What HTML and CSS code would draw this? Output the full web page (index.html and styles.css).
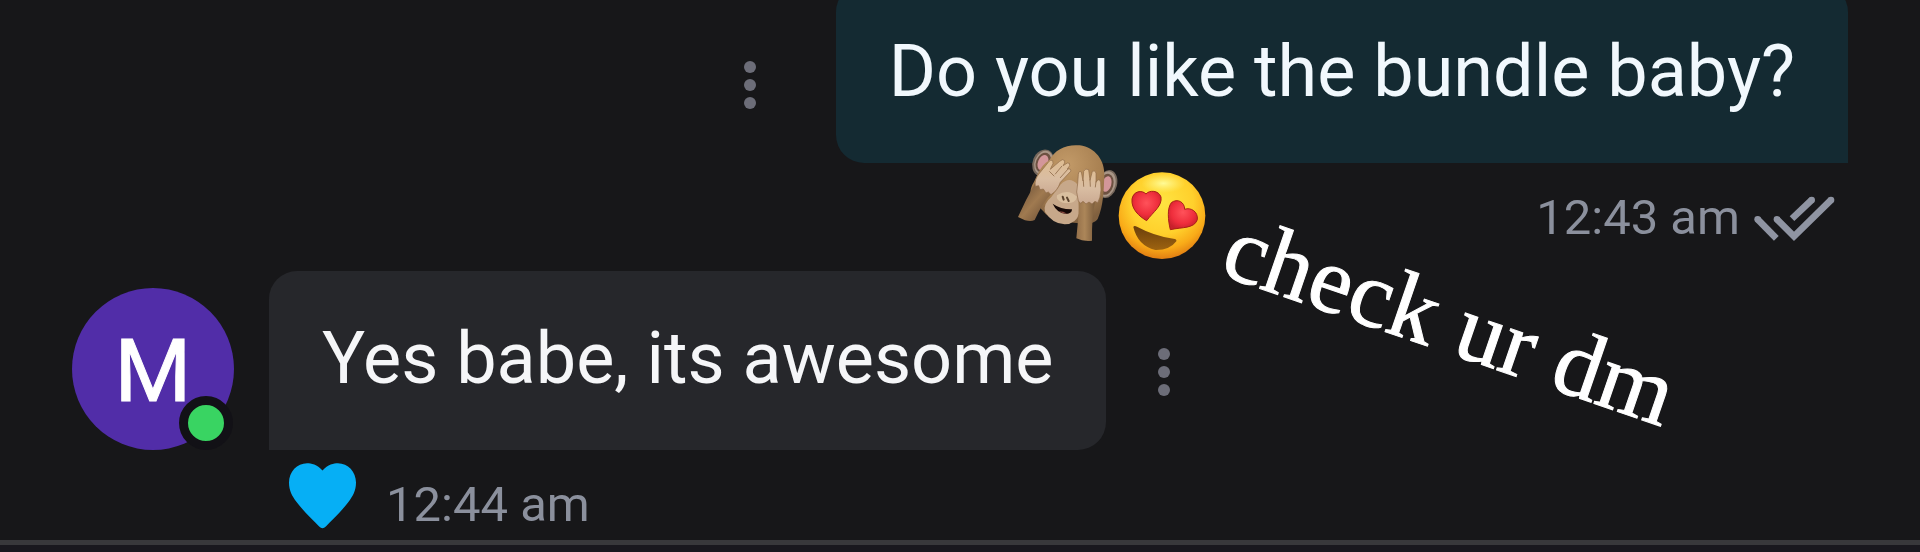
FILE: index.html
```html
<!DOCTYPE html>
<html lang="en">
<head>
<meta charset="utf-8">
<meta name="viewport" content="width=device-width, initial-scale=1">
<title>Chat</title>
<link rel="stylesheet" href="styles.css">
</head>
<body>
<main class="thread">
  <article class="message message-sent">
    <button class="more" type="button" aria-label="Message options"><i class="more-dot"></i><i class="more-dot"></i><i class="more-dot"></i></button>
    <p class="bubble bubble-sent">Do you like the bundle baby?</p>
    <div class="meta meta-sent">
      <time>12:43 am</time>
      <svg class="checks" viewBox="756 130 252 144" role="img" aria-label="Read">
        <g fill="none" stroke="#8f94a2" stroke-width="20">
          <path d="M773 206L829 263"/>
          <path d="M831 206L882 257L993 148"/>
          <path d="M876 204L935 148"/>
        </g>
        <g fill="#8f94a2"><circle cx="773" cy="206" r="10"/><circle cx="831" cy="206" r="10"/><circle cx="993" cy="148" r="10"/><circle cx="935" cy="148" r="10"/></g>
      </svg>
    </div>
  </article>

  <article class="message message-received">
    <div class="avatar">M<span class="status"></span></div>
    <p class="bubble bubble-received">Yes babe, its awesome</p>
    <button class="more" type="button" aria-label="Message options"><i class="more-dot"></i><i class="more-dot"></i><i class="more-dot"></i></button>
    <div class="meta meta-received">
      <svg class="heart" viewBox="0 0 200 196" role="img" aria-label="Blue heart">
        <path fill="#06aff5" d="M100 22C84 3 66 0 54 0C24 0 0 25 0 58C0 82 10 100 22 115C40 140 70 168 90 189Q100 199 110 189C130 168 160 140 178 115C190 100 200 82 200 58C200 25 176 0 146 0C134 0 116 3 100 22Z"/>
      </svg>
      <time>12:44 am</time>
    </div>
  </article>

  <svg class="sticker sticker-monkey" viewBox="48 39 306 300" role="img" aria-label="See no evil monkey">
    <defs>
      <radialGradient id="fur" cx="50%" cy="25%" r="75%"><stop offset="0" stop-color="#c29a68"/><stop offset=".6" stop-color="#a98152"/><stop offset="1" stop-color="#80603f"/></radialGradient>
      <linearGradient id="arm-left" x1="0" y1="0" x2="1" y2="1"><stop offset=".2" stop-color="#7b5c3e"/><stop offset=".5" stop-color="#a07a50"/><stop offset=".85" stop-color="#75563a"/></linearGradient>
      <linearGradient id="arm-right" x1="0" y1="0" x2="1" y2="0"><stop offset="0" stop-color="#94704a"/><stop offset=".45" stop-color="#ac8659"/><stop offset="1" stop-color="#7c5d3d"/></linearGradient>
      <linearGradient id="hand" x1="0" y1="0" x2="0" y2="1"><stop offset="0" stop-color="#dfbd92"/><stop offset=".55" stop-color="#d9bda2"/><stop offset="1" stop-color="#cbaa92"/></linearGradient>
    </defs>
    <ellipse cx="129" cy="98" rx="31" ry="41" fill="#77685c" transform="rotate(22 129 98)"/>
    <ellipse cx="131" cy="98" rx="27" ry="37" fill="#a99687" transform="rotate(22 131 98)"/>
    <ellipse cx="130" cy="98" rx="22" ry="31" fill="#6d5141" transform="rotate(22 130 98)"/>
    <ellipse cx="129" cy="98" rx="15" ry="24" fill="#d3969a" transform="rotate(22 129 98)"/>
    <ellipse cx="322" cy="162" rx="29" ry="43" fill="#77685c" transform="rotate(15 322 162)"/>
    <ellipse cx="320" cy="162" rx="26" ry="39" fill="#a99687" transform="rotate(15 320 162)"/>
    <ellipse cx="319" cy="163" rx="21" ry="32" fill="#6d5141" transform="rotate(15 319 163)"/>
    <ellipse cx="320" cy="162" rx="14" ry="24" fill="#d3969a" transform="rotate(15 320 162)"/>
    <path fill="url(#fur)" d="M148 91C164 58 199 42 239 46C286 53 315 91 313 138C311 180 311 226 293 267C281 284 255 282 229 279C186 277 145 268 130 244C107 215 80 200 97 164C111 146 116 109 148 91Z"/>
    <path fill="#c7a88a" d="M181 164Q209 136 233 164L237 251Q229 281 194 283Q158 282 135 246Q129 221 154 201Z"/>
    <path fill="#d9bf9f" d="M171 196Q204 174 231 200Q226 224 188 218Q167 211 171 196Z"/>
    <path d="M188 200L191 209M201 203L206 213" stroke="#5c442e" stroke-width="6" stroke-linecap="round"/>
    <path fill="#160907" d="M158 221Q184 239 216 238Q216 251 199 252Q171 250 158 221Z"/>
    <path fill="#8f4a40" d="M176 244Q190 244 202 251Q188 252 176 244Z"/>
    <path fill="url(#arm-left)" d="M106 158Q124 172 153 193Q128 218 104 270Q94 276 75 271L54 261Q76 211 106 158Z"/>
    <path fill="url(#arm-right)" d="M238 213Q263 224 285 216Q275 259 276 332Q250 335 229 325Q235 270 238 213Z"/>
    <path fill="url(#hand)" stroke="#8e6948" stroke-width="2" d="M106 169Q102 148 119 129L145 97Q151 87 158 92Q162 100 154 111L151 118L179 94Q188 85 194 92Q196 99 189 107L202 99Q211 97 209 107L202 117Q215 115 212 124L181 157Q172 183 153 194L145 186L138 189L130 177L120 179L116 167Z"/>
    <path fill="url(#hand)" stroke="#8e6948" stroke-width="2" d="M235 213Q226 185 233 161L235 133Q236 121 244 126L249 153L251 124Q256 113 266 119L270 151L277 124Q285 119 288 129L288 157L294 149Q302 148 302 158L303 180Q301 206 293 218L285 214L276 222L267 216L258 222L249 214L242 220Z"/>
    <path d="M149 125L162 138M185 109L166 132M205 116L181 143M250 151L251 169M270 149L271 169M288 155L286 171" fill="none" stroke="#9d7a59" stroke-width="3" stroke-linecap="round"/>
  </svg>

  <svg class="sticker sticker-smile" viewBox="354 123 264 267" role="img" aria-label="Heart eyes">
    <defs>
      <radialGradient id="face" cx="50%" cy="35%" r="66%"><stop offset="0" stop-color="#ffe441"/><stop offset=".55" stop-color="#ffd02c"/><stop offset=".8" stop-color="#f9ab18"/><stop offset="1" stop-color="#df7a12"/></radialGradient>
      <radialGradient id="shine" cx="50%" cy="50%" r="50%"><stop offset="0" stop-color="#fffb96"/><stop offset="1" stop-color="#fff37c" stop-opacity="0"/></radialGradient>
      <radialGradient id="love" cx="50%" cy="40%" r="60%"><stop offset="0" stop-color="#ff525a"/><stop offset=".65" stop-color="#ef2e3c"/><stop offset="1" stop-color="#c9212c"/></radialGradient>
      <linearGradient id="mouth" x1="0" y1="0" x2="0" y2="1"><stop offset="0" stop-color="#6b3f0b"/><stop offset="1" stop-color="#9d6310"/></linearGradient>
    </defs>
    <circle cx="486" cy="257" r="130" fill="url(#face)"/>
    <ellipse cx="490" cy="160" rx="66" ry="29" fill="url(#shine)"/>
    <path fill="url(#love)" stroke="#a91f17" stroke-width="3" d="M438 192C447 180 476 180 483 201C487 228 461 244 440 272C417 259 393 237 396 207C400 183 426 179 438 192Z"/>
    <path fill="url(#love)" stroke="#a91f17" stroke-width="3" d="M554 238C572 231 595 245 592 269C583 296 547 291 511 299C504 270 501 235 514 218C532 204 554 216 554 238Z"/>
    <path fill="url(#mouth)" d="M400 291Q402 286 411 290Q463 318 520 326Q531 326 529 334Q509 361 466 360Q413 347 400 291Z"/>
  </svg>

  <p class="sticker sticker-text">check ur dm</p>
</main>
<footer class="composer-edge"></footer>
</body>
</html>
```
FILE: styles.css
```css
* {
  box-sizing: border-box;
}

body {
  display: flex;
  flex-direction: column;
  min-height: 100vh;
  margin: 0;
  background: #171719;
  color: #f5f6f8;
  font-family: Roboto, "Liberation Sans", sans-serif;
  overflow: hidden;
}

p {
  margin: 0;
}

.thread {
  position: relative;
  display: flex;
  flex-direction: column;
  gap: 23px;
  padding: 0 72px 5px;
}

.message {
  display: grid;
}

.message-sent {
  grid-template-columns: auto auto;
  justify-content: end;
  column-gap: 56px;
  margin-top: -16px;
}

.message-received {
  grid-template-columns: auto auto auto;
  justify-content: start;
  column-gap: 28px;
}

.bubble {
  padding: 46px 53px 49px;
  font-size: 72px;
  line-height: 84px;
  white-space: nowrap;
}

.bubble-sent {
  border-radius: 28px 28px 0 28px;
  background: #142a32;
  color: #f1f8fd;
}

.bubble-received {
  border-radius: 28px 28px 28px 0;
  background: #26272b;
}

.more {
  display: flex;
  flex-direction: column;
  align-items: center;
  justify-content: center;
  gap: 6px;
  width: 60px;
  padding: 22px 0 0;
  border: 0;
  background: none;
}

.more-dot {
  width: 12px;
  height: 12px;
  border-radius: 50%;
  background: #6c6d78;
}

.avatar {
  position: relative;
  align-self: end;
  display: grid;
  place-items: center;
  width: 162px;
  height: 162px;
  margin-right: 7px;
  padding-top: 4px;
  border-radius: 50%;
  background: #512da8;
  color: #ffffff;
  font-size: 88px;
  line-height: 88px;
  -webkit-text-stroke: 1px #ffffff;
}

.status {
  position: absolute;
  right: 1px;
  bottom: 0;
  width: 54px;
  height: 54px;
  border: 9px solid #121116;
  border-radius: 50%;
  background: #39d462;
}

.meta {
  grid-column: 2;
  display: flex;
  color: #8b909d;
  font-size: 49px;
  line-height: 60px;
  white-space: nowrap;
}

.meta-sent {
  align-items: center;
  justify-content: flex-end;
  gap: 12px;
  padding: 25px 12px 0 0;
}

.meta-received {
  align-items: flex-end;
  gap: 30px;
  padding: 13px 0 0 20px;
}

.checks {
  width: 84px;
  height: 48px;
}

.heart {
  width: 67px;
  height: 66px;
  margin-bottom: 6px;
}

.sticker {
  position: absolute;
}

.sticker-monkey {
  top: 143px;
  right: 802px;
  width: 102px;
  height: 100px;
}

.sticker-smile {
  top: 171px;
  right: 714px;
  width: 88px;
  height: 89px;
}

.sticker-text {
  top: 194px;
  right: 228px;
  width: 474px;
  color: #ffffff;
  font-family: "Liberation Serif", serif;
  font-size: 95px;
  line-height: 96px;
  white-space: nowrap;
  -webkit-text-stroke: 1px #ffffff;
  transform: rotate(19deg);
  transform-origin: 0 80px;
}

.composer-edge {
  flex: 1;
  min-height: 12px;
  border-top: 5px solid #38383b;
  background: #19181e;
}
```
